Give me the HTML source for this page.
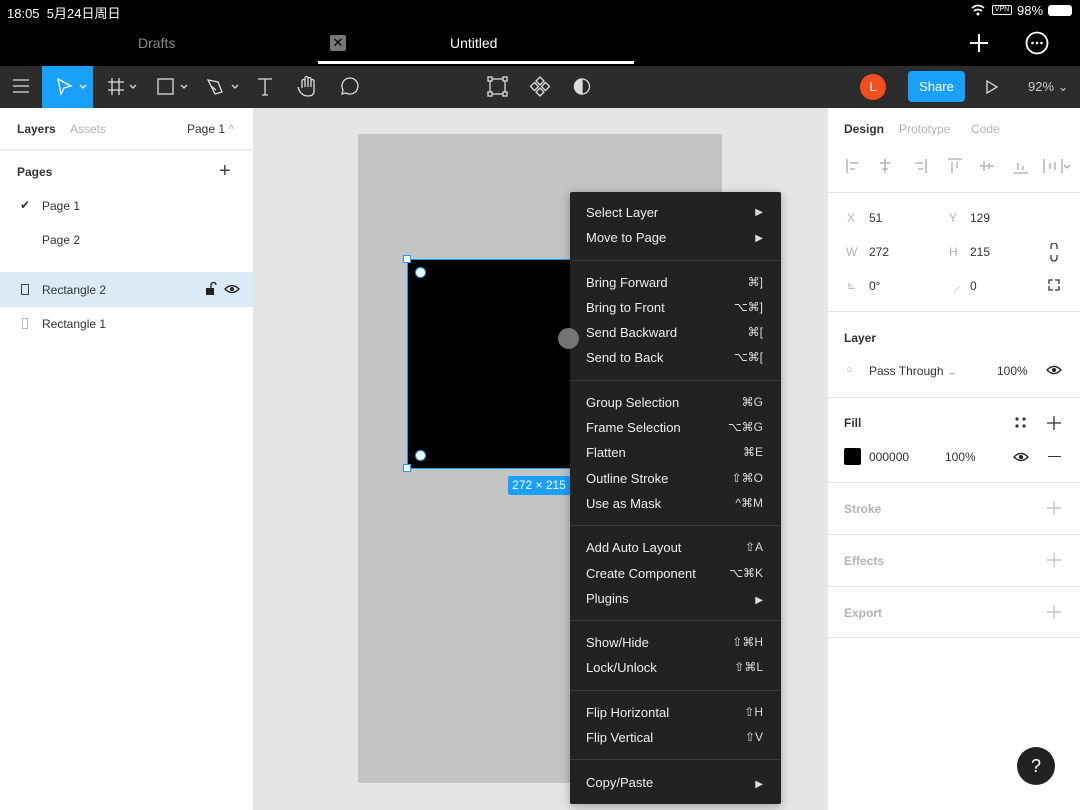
<!DOCTYPE html>
<html><head><meta charset="utf-8"><style>
*{margin:0;padding:0;box-sizing:border-box}
body{width:1080px;height:810px;overflow:hidden;font-family:"Liberation Sans","Noto Sans CJK SC",sans-serif;background:#e5e5e5;position:relative}
.a{position:absolute}
.t{font-size:13px;color:#333;white-space:nowrap}
.m{position:absolute;left:586px;color:#eee;font-size:13px;white-space:nowrap}
.k{position:absolute;right:317px;color:#ddd;font-size:12px;line-height:15px;font-family:"Liberation Sans","DejaVu Sans",sans-serif}
.sep{position:absolute;left:570px;width:210px;height:1px;background:#3a3a3a}
.hr{position:absolute;left:828px;width:252px;height:1px;background:#e6e6e6}
.g{color:#b3b3b3}
</style></head><body>
<!-- top bar -->
<div class="a" style="left:0;top:0;width:1080px;height:66px;background:#000"></div>
<div class="a" style="left:7px;top:3px;color:#fff;font-size:13px">18:05&nbsp;&nbsp;5月24日周日</div>
<svg class="a" style="left:970px;top:3px" width="20" height="14"><path d="M2 5 Q8 0 14 5 M4 8 Q8 5 12 8" stroke="#fff" stroke-width="1.6" fill="none"/><circle cx="8" cy="11" r="1.5" fill="#fff"/></svg>
<div class="a" style="left:992px;top:5px;width:20px;height:10px;border:1px solid #fff;border-radius:2px;font-size:7px;color:#fff;text-align:center;line-height:8px">VPN</div>
<div class="a" style="left:1017px;top:3px;color:#fff;font-size:13px">98%</div>
<div class="a" style="left:1048px;top:5px;width:24px;height:11px;background:#fff;border-radius:3px"></div>
<div class="a" style="left:138px;top:35px;color:#888;font-size:14px">Drafts</div>
<div class="a" style="left:330px;top:35px;width:16px;height:16px;background:#777;border-radius:2px;color:#000;font-size:13px;text-align:center;line-height:16px">✕</div>
<div class="a" style="left:450px;top:35px;color:#fff;font-size:14px">Untitled</div>
<div class="a" style="left:318px;top:61px;width:316px;height:3px;background:#fff"></div>
<svg class="a" style="left:968px;top:32px" width="22" height="22"><path d="M11 2V20M2 11H20" stroke="#fff" stroke-width="2"/></svg>
<svg class="a" style="left:1025px;top:31px" width="24" height="24"><circle cx="12" cy="12" r="10.5" stroke="#fff" stroke-width="1.8" fill="none"/><circle cx="7.5" cy="12" r="1.3" fill="#fff"/><circle cx="12" cy="12" r="1.3" fill="#fff"/><circle cx="16.5" cy="12" r="1.3" fill="#fff"/></svg>
<!-- toolbar -->
<div class="a" style="left:0;top:66px;width:1080px;height:42px;background:#2c2c2c"></div>
<div class="a" style="left:42px;top:66px;width:51px;height:42px;background:#18a0fb"></div>
<svg class="a" style="left:0;top:66px" width="640" height="42" fill="none" stroke="#ddd" stroke-width="1.3">
<path d="M13 14H29M13 20H29M13 26H29"/>
<path d="M58 13L71 20L64 22L61 28Z" stroke="#fff"/><path d="M80 19L83 22L86 19" stroke="#fff"/>
<path d="M112 12V29M119 12V29M108 16H124M108 24H124"/><path d="M130 19L133 22L136 19"/>
<rect x="158" y="13" width="15" height="15"/><path d="M181 19L184 22L187 19"/>
<path d="M208 14L218 16L222 26L215 28L211 20Z M211 20L216 24"/><path d="M232 19L235 22L238 19"/>
<path d="M258 13H272M265 13V29M262 29H268"/>
<path d="M302 22V15a1.5 1.5 0 013 0V21M305 14V12a1.5 1.5 0 013 0V21M308 13a1.5 1.5 0 013 0V21M311 15a1.5 1.5 0 013 0V25Q314 30 308 30Q302 30 299 24L298 21"/>
<path d="M342 28L343 24A8 8 0 1 1 346 27Z"/>
<rect x="490" y="13" width="15" height="15"/><rect x="488" y="11" width="4" height="4" fill="#2c2c2c"/><rect x="503" y="11" width="4" height="4" fill="#2c2c2c"/><rect x="488" y="26" width="4" height="4" fill="#2c2c2c"/><rect x="503" y="26" width="4" height="4" fill="#2c2c2c"/>
<path d="M540 11L544 15L540 19L536 15Z M540 22L544 26L540 30L536 26Z M534.5 16.5L538.5 20.5L534.5 24.5L530.5 20.5Z M545.5 16.5L549.5 20.5L545.5 24.5L541.5 20.5Z"/>
<circle cx="582" cy="20.5" r="7.5"/><path d="M582 13A7.5 7.5 0 0 0 582 28Z" fill="#ddd"/>
</svg>
<div class="a" style="left:860px;top:74px;width:26px;height:26px;border-radius:50%;background:#f24e1e;color:#fff;font-size:13px;text-align:center;line-height:26px">L</div>
<div class="a" style="left:908px;top:71px;width:57px;height:31px;border-radius:4px;background:#18a0fb;color:#fff;font-size:13px;text-align:center;line-height:31px">Share</div>
<svg class="a" style="left:985px;top:79px" width="14" height="16"><path d="M2 2L12 8L2 14Z" stroke="#ddd" stroke-width="1.3" fill="none"/></svg>
<div class="a" style="left:1028px;top:79px;color:#ccc;font-size:13px">92% ⌄</div>
<!-- left panel -->
<div class="a" style="left:0;top:108px;width:253px;height:702px;background:#fff"></div>
<div class="a t" style="left:17px;top:122px;font-weight:bold;font-size:12px">Layers</div>
<div class="a t g" style="left:70px;top:122px;font-size:12px">Assets</div>
<div class="a t" style="left:187px;top:122px;font-size:12px">Page 1 <span class="g">^</span></div>
<div class="a" style="left:0;top:149px;width:253px;height:2px;background:#eee"></div>
<div class="a t" style="left:17px;top:165px;font-weight:bold;font-size:12px">Pages</div>
<div class="a t" style="left:219px;top:160px;font-size:20px;font-weight:300;color:#444">+</div>
<div class="a t" style="left:20px;top:198px;font-size:12px">✔</div>
<div class="a t" style="left:42px;top:199px;font-size:12px">Page 1</div>
<div class="a t" style="left:42px;top:233px;font-size:12px">Page 2</div>
<div class="a" style="left:0;top:272px;width:253px;height:35px;background:#daebf7"></div>
<div class="a" style="left:21px;top:284px;width:8px;height:11px;border:1.3px solid #444"></div>
<div class="a t" style="left:42px;top:283px;font-size:12px">Rectangle 2</div>
<svg class="a" style="left:205px;top:282px" width="36" height="14"><rect x="1" y="6" width="8" height="7" fill="#222"/><path d="M6 6V3a2.5 2.5 0 015 0" stroke="#222" stroke-width="1.3" fill="none"/><path d="M20 7Q27 0 34 7Q27 14 20 7Z" stroke="#222" stroke-width="1.3" fill="none"/><circle cx="27" cy="7" r="2" fill="#222"/></svg>
<div class="a" style="left:22px;top:318px;width:6px;height:11px;border:1.3px solid #bbb"></div>
<div class="a t" style="left:42px;top:317px;font-size:12px">Rectangle 1</div>
<!-- canvas -->
<div class="a" style="left:358px;top:134px;width:364px;height:649px;background:#c4c4c4"></div>
<div class="a" style="left:407px;top:259px;width:200px;height:210px;background:#000;border:1.5px solid #18a0fb"></div>
<div class="a" style="left:403px;top:255px;width:8px;height:8px;background:#fff;border:1px solid #18a0fb"></div>
<div class="a" style="left:403px;top:464px;width:8px;height:8px;background:#fff;border:1px solid #18a0fb"></div>
<div class="a" style="left:415px;top:267px;width:11px;height:11px;border-radius:50%;background:#fff;border:1.5px solid #18a0fb"></div>
<div class="a" style="left:415px;top:450px;width:11px;height:11px;border-radius:50%;background:#fff;border:1.5px solid #18a0fb"></div>
<div class="a" style="left:508px;top:476px;width:62px;height:19px;background:#18a0fb;border-radius:2px;color:#fff;font-size:12px;text-align:center;line-height:19px">272 × 215</div>
<!-- menu -->
<div class="a" style="left:570px;top:192px;width:211px;height:612px;background:#222;border-radius:2px;box-shadow:0 2px 10px rgba(0,0,0,.3)"></div>
<div class="a" style="left:558px;top:328px;width:21px;height:21px;border-radius:50%;background:rgba(128,128,128,.9)"></div>
<div class="m" style="top:205px">Select Layer</div><div class="k" style="top:205px;font-size:10px">▶</div>
<div class="m" style="top:230px">Move to Page</div><div class="k" style="top:231px;font-size:10px">▶</div>
<div class="sep" style="top:260px"></div>
<div class="m" style="top:275px">Bring Forward</div><div class="k" style="top:275px">⌘]</div>
<div class="m" style="top:300px">Bring to Front</div><div class="k" style="top:300px">⌥⌘]</div>
<div class="m" style="top:325px">Send Backward</div><div class="k" style="top:325px">⌘[</div>
<div class="m" style="top:350px">Send to Back</div><div class="k" style="top:350px">⌥⌘[</div>
<div class="sep" style="top:380px"></div>
<div class="m" style="top:395px">Group Selection</div><div class="k" style="top:395px">⌘G</div>
<div class="m" style="top:420px">Frame Selection</div><div class="k" style="top:420px">⌥⌘G</div>
<div class="m" style="top:445px">Flatten</div><div class="k" style="top:445px">⌘E</div>
<div class="m" style="top:471px">Outline Stroke</div><div class="k" style="top:471px">⇧⌘O</div>
<div class="m" style="top:496px">Use as Mask</div><div class="k" style="top:496px">^⌘M</div>
<div class="sep" style="top:525px"></div>
<div class="m" style="top:540px">Add Auto Layout</div><div class="k" style="top:540px">⇧A</div>
<div class="m" style="top:566px">Create Component</div><div class="k" style="top:566px">⌥⌘K</div>
<div class="m" style="top:591px">Plugins</div><div class="k" style="top:593px;font-size:10px">▶</div>
<div class="sep" style="top:620px"></div>
<div class="m" style="top:635px">Show/Hide</div><div class="k" style="top:635px">⇧⌘H</div>
<div class="m" style="top:660px">Lock/Unlock</div><div class="k" style="top:660px">⇧⌘L</div>
<div class="sep" style="top:690px"></div>
<div class="m" style="top:705px">Flip Horizontal</div><div class="k" style="top:705px">⇧H</div>
<div class="m" style="top:730px">Flip Vertical</div><div class="k" style="top:730px">⇧V</div>
<div class="sep" style="top:759px"></div>
<div class="m" style="top:775px">Copy/Paste</div><div class="k" style="top:777px;font-size:10px">▶</div>
<!-- right panel -->
<div class="a" style="left:828px;top:108px;width:252px;height:702px;background:#fff"></div>
<div class="a t" style="left:844px;top:122px;font-weight:bold;font-size:12px">Design</div>
<div class="a t g" style="left:899px;top:122px;font-size:12px">Prototype</div>
<div class="a t g" style="left:971px;top:122px;font-size:12px">Code</div>
<svg class="a" style="left:840px;top:155px" width="230" height="22" stroke="#aaa" stroke-width="1.3" fill="none">
<path d="M7 4V18M10 8H18M10 14H15"/><path d="M45 4V18M40 8H50M42 14H48"/><path d="M86 4V18M75 8H83M78 14H83"/>
<path d="M108 4H122M112 7V18M117 7V13"/><path d="M140 11H154M144 6V16M149 8V14"/><path d="M174 18H188M178 8V15M183 11V15"/>
<path d="M204 4V18M222 4V18M210 8V14M215 7V15M224 10L227 13L230 10"/></svg>
<div class="hr" style="top:192px"></div>
<div class="a t g" style="left:847px;top:211px;font-size:12px">X</div><div class="a t" style="left:869px;top:211px;font-size:12px">51</div>
<div class="a t g" style="left:949px;top:211px;font-size:12px">Y</div><div class="a t" style="left:970px;top:211px;font-size:12px">129</div>
<div class="a t g" style="left:846px;top:245px;font-size:12px">W</div><div class="a t" style="left:869px;top:245px;font-size:12px">272</div>
<div class="a t g" style="left:949px;top:245px;font-size:12px">H</div><div class="a t" style="left:970px;top:245px;font-size:12px">215</div>
<div class="a t g" style="left:847px;top:279px;font-size:11px">⊾</div><div class="a t" style="left:869px;top:279px;font-size:12px">0°</div>
<div class="a t g" style="left:948px;top:279px;font-size:12px">╭</div><div class="a t" style="left:970px;top:279px;font-size:12px">0</div>
<svg class="a" style="left:1046px;top:243px" width="16" height="48" stroke="#333" stroke-width="1.3" fill="none"><path d="M5 6V3a3 3 0 016 0V6M5 12V15a3 3 0 006 0V12"/><path d="M3 41V37H7M9 37H13V41M13 43V47H9M7 47H3V43"/></svg>
<div class="hr" style="top:311px"></div>
<div class="a t" style="left:844px;top:331px;font-weight:bold;font-size:12px">Layer</div>
<div class="a t g" style="left:846px;top:364px;font-size:11px">○</div>
<div class="a t" style="left:869px;top:364px;font-size:12px">Pass Through <span class="g">⌄</span></div>
<div class="a t" style="left:997px;top:364px;font-size:12px">100%</div>
<svg class="a" style="left:1046px;top:364px" width="16" height="12"><path d="M1 6Q8 -1 15 6Q8 13 1 6Z" stroke="#222" stroke-width="1.3" fill="none"/><circle cx="8" cy="6" r="2" fill="#222"/></svg>
<div class="hr" style="top:397px"></div>
<div class="a t" style="left:844px;top:416px;font-weight:bold;font-size:12px">Fill</div>
<svg class="a" style="left:1014px;top:416px" width="14" height="14" fill="#333"><circle cx="3" cy="3" r="1.6"/><circle cx="10" cy="3" r="1.6"/><circle cx="3" cy="10" r="1.6"/><circle cx="10" cy="10" r="1.6"/></svg>
<svg class="a" style="left:1047px;top:416px" width="14" height="14"><path d="M7 0V14M0 7H14" stroke="#333" stroke-width="1.3"/></svg>
<div class="a" style="left:844px;top:448px;width:17px;height:17px;background:#000;border-radius:2px"></div>
<div class="a t" style="left:869px;top:450px;font-size:12px">000000</div>
<div class="a t" style="left:945px;top:450px;font-size:12px">100%</div>
<svg class="a" style="left:1013px;top:451px" width="16" height="12"><path d="M1 6Q8 -1 15 6Q8 13 1 6Z" stroke="#222" stroke-width="1.3" fill="none"/><circle cx="8" cy="6" r="2" fill="#222"/></svg>
<div class="a" style="left:1048px;top:456px;width:13px;height:1.3px;background:#333"></div>
<div class="hr" style="top:482px"></div>
<div class="a t g" style="left:844px;top:502px;font-weight:bold;font-size:12px">Stroke</div>
<div class="hr" style="top:534px"></div>
<div class="a t g" style="left:844px;top:554px;font-weight:bold;font-size:12px">Effects</div>
<div class="hr" style="top:586px"></div>
<div class="a t g" style="left:844px;top:606px;font-weight:bold;font-size:12px">Export</div>
<div class="hr" style="top:637px"></div>
<svg class="a" style="left:1047px;top:501px" width="14" height="120" stroke="#bbb" stroke-width="1.2"><path d="M7 0V14M0 7H14M7 52V66M0 59H14M7 104V118M0 111H14"/></svg>
<div class="a" style="left:1017px;top:747px;width:38px;height:38px;border-radius:50%;background:#222;color:#fff;font-size:18px;text-align:center;line-height:38px">?</div>
</body></html>
